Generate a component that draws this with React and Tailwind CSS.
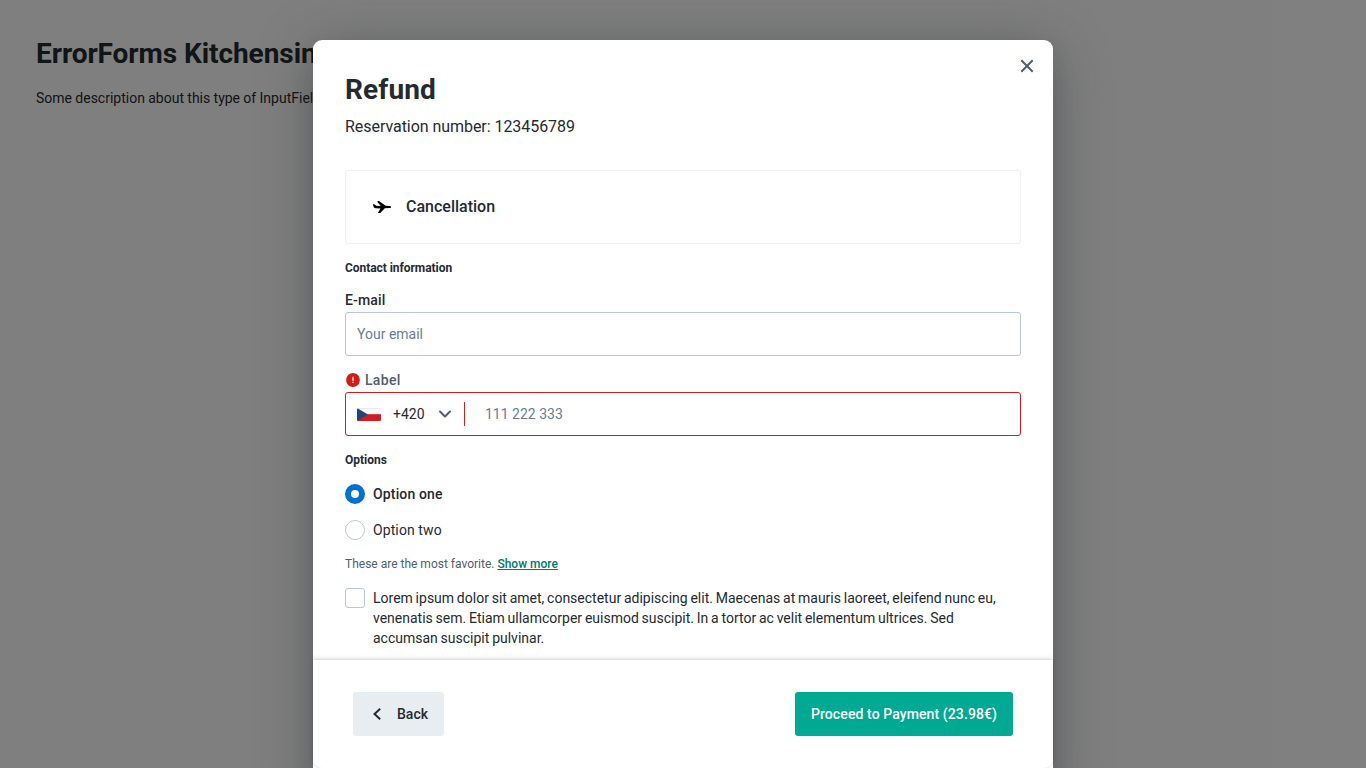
import React from "react";

function Plane() {
  return (
    <svg width="24" height="24" viewBox="0 0 24 24" fill="#000" className="shrink-0">
      <path d="M2.900 9.200h1.300l2 1.600 4.500.1-3.600-4.300 1.800-.5 6.900 4.700 3.700.1c1.100.1 1.600.5 1.600 1.100s-.6 1-1.700 1l-4.600.2-4.500 4.900H7.800l2.700-4.600-4.700-.3c-1.200-.1-2-.6-2.200-1.500z" />
    </svg>
  );
}

function CzechFlag() {
  return (
    <svg width="24" height="13" viewBox="0 0 24 13" className="mt-px shrink-0">
      <defs>
        <clipPath id="flag-shape">
          <rect width="24" height="13" rx="1.5" />
        </clipPath>
      </defs>
      <g clipPath="url(#flag-shape)">
        <rect width="24" height="13" fill="#f8f8f9" />
        <rect width="24" height="1" fill="#e9e9ec" />
        <rect y="6.200" width="24" height="6.800" fill="#d01c26" />
        <path d="M0 0 11 6.500 0 13z" fill="#1d467e" />
      </g>
    </svg>
  );
}

function Radio({ label, checked }) {
  return (
    <label className="flex h-5 items-center gap-2">
      <span
        className={
          checked
            ? "flex size-5 items-center justify-center rounded-full bg-[#0070d2]"
            : "flex size-5 rounded-full border border-[#bac7d5] bg-white"
        }
      >
        {checked && <span className="size-2 rounded-full bg-white" />}
      </span>
      <span className={checked ? "font-medium tracking-[0.15px]" : "font-normal tracking-[0.1px]"}>{label}</span>
    </label>
  );
}

function Header() {
  return (
    <header className="px-8 pt-[34px]">
      <h2 className="text-[28px] leading-8 font-bold tracking-[0.1px]">Refund</h2>
      <p className="mt-[9px] text-base leading-6 tracking-[-0.05px]">Reservation number: 123456789</p>
    </header>
  );
}

function Footer() {
  return (
    <footer className="relative flex h-[108px] shrink-0 items-center justify-between rounded-b-[9px] bg-white px-10 shadow-[0_0_2px_0_rgba(37,42,49,0.16),0_-2px_4px_0_rgba(37,42,49,0.12)]">
      <button className="flex h-11 w-[91px] items-center rounded-[3px] bg-[#e8edf1] pl-3 font-medium">
        <svg width="24" height="24" viewBox="0 0 24 24" fill="none" stroke="#252a31" strokeWidth="2">
          <path d="m15.200 6.700-5.700 5.300 5.700 5.300" />
        </svg>
        <span className="ml-2">Back</span>
      </button>
      <button className="flex h-11 w-[218px] items-center justify-center rounded-[3px] bg-[#00a991] font-medium tracking-[0.1px] text-white">
        Proceed to Payment (23.98€)
      </button>
    </footer>
  );
}

export default function App() {
  return (
    <div className="relative h-screen overflow-hidden bg-white font-[Roboto,sans-serif] text-sm leading-5 text-[#252a31]">
      <main className="px-9 pt-[38px]">
        <h1 className="text-[28px] leading-8 font-bold tracking-[-0.06px]">ErrorForms Kitchensink</h1>
        <p className="mt-[18px] [word-spacing:-0.15px]">Some description about this type of InputFields</p>
      </main>
      <div className="absolute inset-0 flex justify-center bg-black/50 pt-10">
        <div className="relative -mb-10 flex w-[740px] flex-col rounded-[9px] bg-white pb-10 shadow-[0_12px_24px_-4px_rgba(37,42,49,0.24),0_8px_60px_0_rgba(37,42,49,0.32)]">
          <button className="absolute top-[14px] right-[14px]" aria-label="Close">
            <svg width="24" height="24" viewBox="0 0 24 24" fill="none" stroke="#4f5e71" strokeWidth="2">
              <path d="m6.300 6.300 11.400 11.400M17.700 6.300 6.300 17.700" />
            </svg>
          </button>
          <div className="min-h-0 flex-1 overflow-hidden">
            <Header />
            <section className="px-8 pt-[31px]">
              <div className="flex h-[74px] items-center rounded-[3px] border border-[#eff0f2] px-6">
                <Plane />
                <h3 className="ml-3 text-base leading-6 font-medium">Cancellation</h3>
              </div>
              <h4 className="mt-4 text-xs leading-4 font-bold tracking-[-0.05px]">Contact information</h4>
              <div className="mt-[14px] font-medium tracking-[0.15px]">E-mail</div>
              <input
                className="mt-[2px] block h-11 w-full rounded-[3px] border border-[#bac7d5] px-[11px] placeholder:text-[#697d95] placeholder:opacity-100"
                placeholder="Your email"
              />
              <div className="mt-[14px] flex items-center font-medium tracking-[0.3px] text-[#4f5e71]">
                <svg width="16" height="16" viewBox="0 0 16 16" className="mr-1">
                  <circle cx="8" cy="8" r="6.900" fill="#d21c1c" />
                  <path d="M8 4.700v4M8 9.800v1.300" stroke="#fff" strokeWidth="1.300" />
                </svg>
                Label
              </div>
              <div className="mt-[2px] flex h-11 items-center rounded-[3px] border border-[#d21c1c] pl-[11px]">
                <CzechFlag />
                <span className="ml-3 w-10">+420</span>
                <svg width="24" height="24" viewBox="0 0 24 24" fill="none" stroke="#4f5e71" strokeWidth="2" strokeLinecap="round" strokeLinejoin="round">
                  <path d="m7 9.500 5 5 5-5" />
                </svg>
                <span className="ml-[7px] h-6 w-px bg-[#d21c1c]" />
                <input
                  className="ml-5 min-w-0 flex-1 placeholder:text-[#697d95] placeholder:opacity-100"
                  placeholder="111 222 333"
                />
              </div>
              <h4 className="mt-4 text-xs leading-4 font-bold">Options</h4>
              <div className="mt-4 flex flex-col gap-4">
                <Radio label="Option one" checked />
                <Radio label="Option two" />
              </div>
              <p className="mt-4 text-xs leading-4 text-[#4f5e71]">
                These are the most favorite.{" "}
                <a className="font-medium text-[#007a69] underline">Show more</a>
              </p>
              <label className="mt-4 flex gap-2">
                <span className="size-5 shrink-0 rounded-[3px] border border-[#bac7d5]" />
                <span className="[word-spacing:-0.7px]">
                  Lorem ipsum dolor sit amet, consectetur adipiscing elit. Maecenas at mauris laoreet, eleifend nunc eu,
                  <br />
                  venenatis sem. Etiam ullamcorper euismod suscipit. In a tortor ac velit elementum ultrices. Sed
                  <br />
                  accumsan suscipit pulvinar.
                </span>
              </label>
            </section>
          </div>
          <Footer />
        </div>
      </div>
    </div>
  );
}
